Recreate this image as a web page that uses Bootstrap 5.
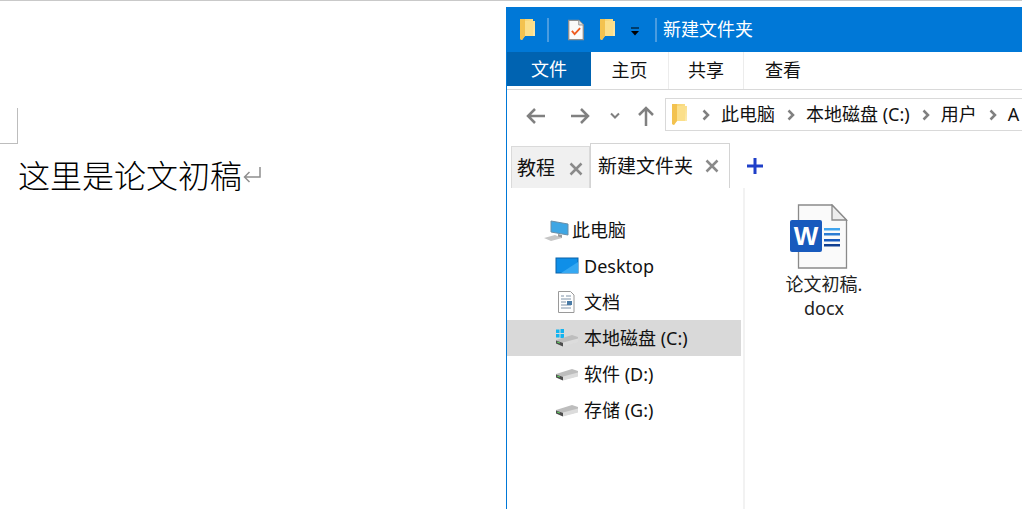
<!DOCTYPE html>
<html lang="zh">
<head>
<meta charset="utf-8">
<title>论文初稿</title>
<link href="https://cdn.jsdelivr.net/npm/bootstrap@5.3.0/dist/css/bootstrap.min.css" rel="stylesheet">
<style>
html,body{height:509px;overflow:hidden;background:#fff}
body{font-family:"Noto Sans","Noto Sans CJK SC",sans-serif;color:#111;border-top:1px solid #c9c9c9}
.doc-pane{width:506px;flex:none}
.crop-mark{width:18px;height:36px;margin-top:107px;border-right:1px solid #bdbdbd;border-bottom:1px solid #bdbdbd}
.doc-line{margin:13px 0 0 18px;font-size:32px;line-height:34px;color:#000;font-family:"Noto Sans CJK SC",sans-serif;font-weight:300}
.explorer{width:516px;flex:none;margin-top:6px;height:502px;border-left:1px solid #0078d7;overflow:hidden}
.title-strip{height:45px;background:#0078d7;color:#fff;font-size:18px;flex:none}
.q-sep{width:2px;height:24px;background:#4a9ce0;flex:none}
.ribbon{height:38px;border-bottom:1px solid #d9d9d9;font-size:18px;flex:none}
.rib-file{width:84px;height:34px;background:#0063b1;color:#fff}
.rib-tab{height:37px}
.rib-home{width:77px}
.rib-share{width:76px;border-left:1px solid #ececec;border-right:1px solid #ececec}
.rib-view{width:78px}
.addr-row{height:53px;flex:none;padding-top:8px}
.arrow-set{height:35px}
.addr-box{height:33px;border:solid #d9d9d9;border-width:1px 0 1px 1px;font-size:18px;white-space:nowrap;overflow:hidden;flex:1;margin-left:11px}
.crumb-sep{margin:0 11px 0 12px;flex:none}
.tab-row{height:45px;flex:none;font-size:19px}
.tab-off{width:79px;height:42px;margin-left:4px;padding:2px 0 0 5px;background:#f0f0f0;border:1px solid #dadada;border-bottom:0}
.tab-on{width:140px;height:45px;padding-left:7px;border:1px solid #d4d4d4;border-bottom:0;background:#fff}
.tab-add{width:50px;height:45px}
.content-zone{flex:1;min-height:0}
.tree{width:238px;flex:none;border-right:2px solid #f2f2f2;padding-top:24px;font-size:18px}
.tree-row{height:36px;white-space:nowrap}
.tree-top{padding-left:35px}
.tree-sub{padding-left:47px}
.tree-sel{background:#d9d9d9;width:234px}
.tree-ico{width:30px;flex:none}
.files{padding:16px 0 0 26px}
.file-item{width:106px;font-size:18px;line-height:24px;color:#222}
.file-glyph{margin:0 10px 2px 0}
</style>
</head>
<body class="d-flex m-0">
<svg width="0" height="0" class="position-absolute">
  <defs>
    <linearGradient id="fold" x1="0" x2="1" y1="0" y2="1"><stop offset="0" stop-color="#f6cf62"/><stop offset="1" stop-color="#fdeeb8"/></linearGradient>
    <symbol id="folder" viewBox="0 0 15 21"><path d="M0 0h13v2h2v15H5l-1 1-2 3-2-1z" fill="url(#fold)"/><path d="M0 0h5v17l-3 4-2-1z" fill="#f3c24f"/><path d="M5 2h8v15H5z" fill="#fbdf8a"/></symbol>
    <symbol id="drive" viewBox="0 0 24 14"><path d="M1 7 17 2l6 2v5L8 13 1 10z" fill="#bdbdbd"/><path d="M8 9.500 23 5.500v4L8 13.500z" fill="#dcdcdc"/><path d="M1 7.500 8 10v3.500L1 10.500z" fill="#4d4d4d"/><path d="M2 9l3 1" stroke="#5ed05e"/></symbol>
    <symbol id="crumb" viewBox="0 0 8 12"><path d="M1.500 1.500 6 6l-4.500 4.500" fill="none" stroke="#808080" stroke-width="2.500"/></symbol>
    <symbol id="tabx" viewBox="0 0 14 14"><path d="M1.500 1.500l11 11M12.500 1.500l-11 11" stroke="#8a8a8a" stroke-width="2.500"/></symbol>
  </defs>
</svg>
<section class="doc-pane">
  <div class="crop-mark"></div>
  <p class="doc-line d-flex align-items-center">这里是论文初稿<svg width="20" height="17" viewBox="0 0 20 17"><path d="M18 1v10H2.500M7.500 6 2.500 11l5 5" fill="none" stroke="#8f8f8f" stroke-width="1.500"/></svg></p>
</section>
<section class="explorer d-flex flex-column">
  <div class="title-strip d-flex align-items-center">
    <svg style="margin-left:13px" width="15" height="21"><use href="#folder"/></svg>
    <span class="q-sep" style="margin-left:12px"></span>
    <svg style="margin-left:18px" width="18" height="22" viewBox="0 0 19 24"><path d="M1.500 1.500h11l5 5v16h-16z" fill="#fafafa" stroke="#8f8f8f" stroke-width="1.500"/><path d="M12.500 1.500v5h5" fill="#e4e4e4" stroke="#8f8f8f"/><path d="M5 13l3 3.500 6-6.500" fill="none" stroke="#ee5a1f" stroke-width="2"/></svg>
    <svg style="margin-left:15px" width="15" height="21"><use href="#folder"/></svg>
    <svg style="margin:5px 0 0 15px" width="10" height="10" viewBox="0 0 10 10"><path d="M1 1h8" stroke="#000"/><path d="M1 4h8L5 8.500z" fill="#000"/></svg>
    <span class="q-sep" style="margin-left:15px"></span>
    <span style="margin-left:6px">新建文件夹</span>
  </div>
  <div class="ribbon d-flex">
    <div class="rib-file d-flex align-items-center justify-content-center">文件</div>
    <div class="rib-tab rib-home d-flex align-items-center justify-content-center">主页</div>
    <div class="rib-tab rib-share d-flex align-items-center justify-content-center">共享</div>
    <div class="rib-tab rib-view d-flex align-items-center justify-content-center">查看</div>
  </div>
  <div class="addr-row d-flex">
    <div class="arrow-set d-flex align-items-center">
      <svg style="margin-left:18px" width="20" height="18" viewBox="0 0 20 18"><path d="M20 9H3M10 2 3 9l7 7" fill="none" stroke="#808080" stroke-width="2.500"/></svg>
      <svg style="margin-left:26px" width="20" height="18" viewBox="0 0 20 18"><path d="M0 9h17M10 2l7 7-7 7" fill="none" stroke="#808080" stroke-width="2.500"/></svg>
      <svg style="margin-left:19px" width="10" height="8" viewBox="0 0 10 8"><path d="M1 1.500 5 5.500 9 1.500" fill="none" stroke="#808080" stroke-width="2"/></svg>
      <svg style="margin-left:18px" width="16" height="20" viewBox="0 0 16 20"><path d="M8 20V2M1 9l7-7 7 7" fill="none" stroke="#808080" stroke-width="2.500"/></svg>
    </div>
    <div class="addr-box d-flex align-items-center">
      <svg style="margin-left:6px" width="15" height="21"><use href="#folder"/></svg>
      <svg class="crumb-sep" style="margin-left:15px" width="8" height="12"><use href="#crumb"/></svg>
      <span>此电脑</span>
      <svg class="crumb-sep" width="8" height="12"><use href="#crumb"/></svg>
      <span>本地磁盘 (C:)</span>
      <svg class="crumb-sep" width="8" height="12"><use href="#crumb"/></svg>
      <span>用户</span>
      <svg class="crumb-sep" width="8" height="12"><use href="#crumb"/></svg>
      <span>A</span>
    </div>
  </div>
  <div class="tab-row d-flex align-items-end">
    <div class="tab-off d-flex align-items-center">教程<svg style="margin-left:14px" width="14" height="14"><use href="#tabx"/></svg></div>
    <div class="tab-on d-flex align-items-center">新建文件夹<svg style="margin-left:12px" width="14" height="14"><use href="#tabx"/></svg></div>
    <div class="tab-add d-flex align-items-center justify-content-center"><svg width="16" height="16" viewBox="0 0 16 16"><path d="M8 0v16M0 8h16" stroke="#1f3fc8" stroke-width="3"/></svg></div>
  </div>
  <div class="content-zone d-flex">
    <div class="tree">
      <div class="tree-row tree-top d-flex align-items-center">
        <svg class="tree-ico" width="30" height="24" viewBox="0 0 30 24"><path d="M9 3l17 3v11L9 14z" fill="#3ea6e4" stroke="#6b8ea6"/><path d="M16 16l4 1v3l-4-1z" fill="#9a9a9a"/><path d="M2 20l11-3 7 3-11 3z" fill="#c6c6c6"/></svg>
        <span>此电脑</span>
      </div>
      <div class="tree-row tree-sub d-flex align-items-center">
        <svg class="tree-ico" width="30" height="18" viewBox="0 0 30 18"><rect x="2" y="1" width="22" height="15" fill="#0f8fe8" stroke="#0a62a8"/><path d="M7 16 24 5v11z" fill="#35a8f2"/></svg>
        <span>Desktop</span>
      </div>
      <div class="tree-row tree-sub d-flex align-items-center">
        <svg class="tree-ico" width="30" height="24" viewBox="0 0 30 24"><path d="M4.500 1.500h12l3.500 3.500v17.500H4.500z" fill="#fff" stroke="#9a9a9a"/><path d="M7 6h3M12 6h5M7 9h10M7 12h5M7 15h10M7 18h10" stroke="#7f93a8"/><rect x="13" y="11" width="5" height="4" fill="#4a7ba6"/></svg>
        <span>文档</span>
      </div>
      <div class="tree-row tree-sub tree-sel d-flex align-items-center">
        <svg class="tree-ico" width="30" height="22" viewBox="0 0 30 22"><path d="M2 2.500h3.500V6H2zM6.500 2H10v4H6.500zM2 7h3.500v3.500H2zM6.500 7H10v4H6.500z" fill="#14b4f0"/><use href="#drive" x="1" y="6" width="24" height="14"/></svg>
        <span>本地磁盘 (C:)</span>
      </div>
      <div class="tree-row tree-sub d-flex align-items-center">
        <svg class="tree-ico" width="30" height="18" viewBox="0 0 30 18"><use href="#drive" x="1" y="2" width="24" height="14"/></svg>
        <span>软件 (D:)</span>
      </div>
      <div class="tree-row tree-sub d-flex align-items-center">
        <svg class="tree-ico" width="30" height="18" viewBox="0 0 30 18"><use href="#drive" x="1" y="2" width="24" height="14"/></svg>
        <span>存储 (G:)</span>
      </div>
    </div>
    <div class="files">
      <div class="file-item text-center d-flex flex-column align-items-center">
        <svg class="file-glyph" width="60" height="66" viewBox="0 0 60 66">
          <path d="M9.500 1h33.500l14.500 15V64H9.500z" fill="#fafafa" stroke="#8a8a8a" stroke-width="1.300"/>
          <path d="M43 1v15h14.500z" fill="#ededed" stroke="#8a8a8a" stroke-width="1.300"/>
          <rect x="35" y="24" width="16" height="2.500" fill="#41a5ee"/><rect x="35" y="29" width="16" height="2.500" fill="#2b7cd3"/><rect x="35" y="35" width="16" height="2.500" fill="#185abd"/><rect x="35" y="40" width="16" height="2.500" fill="#103f91"/>
          <rect x="1" y="16" width="32" height="32" rx="2" fill="#185abd"/>
          <text x="17" y="41" text-anchor="middle" font-family="Liberation Sans,sans-serif" font-weight="700" font-size="26" fill="#fff">W</text>
        </svg>
        <span>论文初稿.<br>docx</span>
      </div>
    </div>
  </div>
</section>
</body>
</html>
